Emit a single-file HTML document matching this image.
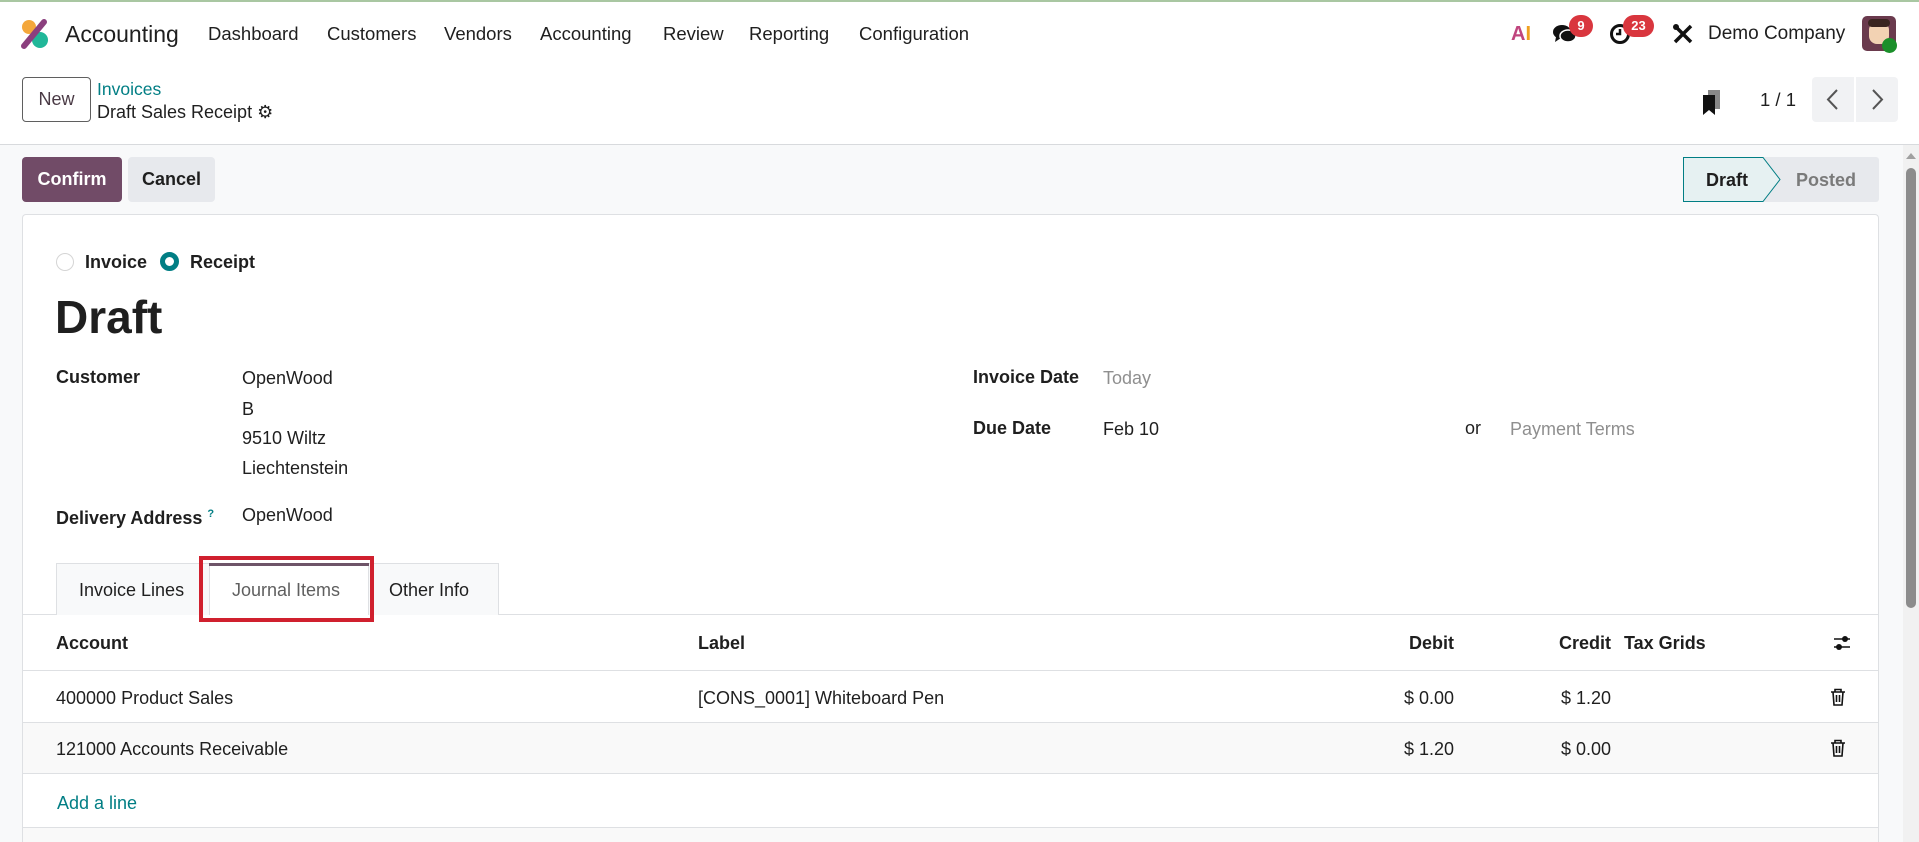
<!DOCTYPE html>
<html style="overflow:hidden;height:842px"><head><meta charset="utf-8"><style>
*{box-sizing:border-box;margin:0;padding:0}
body{width:1919px;height:842px;overflow:hidden;background:#fff;font-family:"Liberation Sans",sans-serif;color:#1f1f1f;position:relative;font-size:18px}
.a{position:absolute;white-space:nowrap;height:30px;line-height:30px}
.b{font-weight:bold}
.g{color:#8f8f8f}
.t{color:#017e84}
</style></head><body>
<div style="position:absolute;left:0;top:0;width:1919px;height:2px;background:#a9c7a2"></div>
<svg style="position:absolute;left:20px;top:18px" width="30" height="32" viewBox="0 0 30 32"><circle cx="20" cy="22" r="8" fill="#21b799"/><circle cx="9" cy="9" r="7" fill="#f4a73b"/><path d="M4 28 L24 4" stroke="#8b3f7e" stroke-width="6" stroke-linecap="round"/></svg>
<div class="a" style="left:65px;top:19px;font-size:23px">Accounting</div>
<div class="a" style="left:208px;top:19px;font-size:18.5px">Dashboard</div>
<div class="a" style="left:327px;top:19px;font-size:18.5px">Customers</div>
<div class="a" style="left:444px;top:19px;font-size:18.5px">Vendors</div>
<div class="a" style="left:540px;top:19px;font-size:18.5px">Accounting</div>
<div class="a" style="left:663px;top:19px;font-size:18.5px">Review</div>
<div class="a" style="left:749px;top:19px;font-size:18.5px">Reporting</div>
<div class="a" style="left:859px;top:19px;font-size:18.5px">Configuration</div>
<div class="a b" style="left:1511px;top:19px;font-size:20px;color:#c0457e">A<span style="color:#f0a020">I</span></div>
<svg style="position:absolute;left:1552px;top:22px" width="26" height="24" viewBox="0 0 26 24"><ellipse cx="10" cy="10" rx="9" ry="7" fill="#111"/><path d="M4 15 L3 20 L9 16Z" fill="#111"/><ellipse cx="16" cy="14" rx="8" ry="6" fill="#111" stroke="#fff" stroke-width="1.5"/></svg>
<div class="a b" style="left:1569px;top:15px;width:24px;height:22px;line-height:22px;border-radius:11px;background:#d9363e;color:#fff;font-size:13px;text-align:center">9</div>
<svg style="position:absolute;left:1609px;top:22px" width="24" height="24" viewBox="0 0 24 24"><circle cx="11" cy="12" r="8.5" fill="none" stroke="#111" stroke-width="3"/><path d="M11 7v5h-4" stroke="#111" stroke-width="2.5" fill="none"/></svg>
<div class="a b" style="left:1623px;top:15px;width:31px;height:22px;line-height:22px;border-radius:11px;background:#d9363e;color:#fff;font-size:13px;text-align:center">23</div>
<svg style="position:absolute;left:1672px;top:23px" width="22" height="22" viewBox="0 0 22 22"><path d="M3 3L19 19M19 3L3 19" stroke="#111" stroke-width="3.5"/><circle cx="4" cy="4" r="3" fill="#111"/></svg>
<div class="a" style="left:1708px;top:19px;font-size:19px">Demo Company</div>
<div style="position:absolute;left:1862px;top:16px;width:34px;height:35px;border-radius:5px;background:#6a3a4d"><div style="position:absolute;left:7px;top:6px;width:20px;height:22px;border-radius:8px;background:#f2d2b3"></div><div style="position:absolute;left:6px;top:3px;width:22px;height:8px;border-radius:5px;background:#3a2520"></div></div>
<div style="position:absolute;left:1882px;top:38px;width:15px;height:15px;border-radius:50%;background:#1b8f2a"></div>
<div class="a" style="left:22px;top:77px;width:69px;height:45px;line-height:43px;border:1px solid #5f5f5f;border-radius:4px;text-align:center;font-size:18px;color:#4a3a45">New</div>
<div class="a t" style="left:97px;top:74px;font-size:17.5px;color:#017e84">Invoices</div>
<div class="a" style="left:97px;top:97px;font-size:18px">Draft Sales Receipt <span style="font-size:18px">⚙</span></div>
<svg style="position:absolute;left:1702px;top:90px" width="20" height="26" viewBox="0 0 20 26"><rect x="6" y="0" width="12" height="19" fill="#888"/><path d="M1 5h12v20l-6-5-6 5z" fill="#111"/></svg>
<div class="a" style="left:1760px;top:85px;font-size:18.5px">1 / 1</div>
<div style="position:absolute;left:1812px;top:77px;width:42px;height:45px;background:#f1f2f4;border-radius:4px 0 0 4px"></div>
<div style="position:absolute;left:1856px;top:77px;width:42px;height:45px;background:#f1f2f4;border-radius:0 4px 4px 0"></div>
<svg style="position:absolute;left:1812px;top:77px" width="86" height="45"><path d="M25 13l-9 9.5 9 9.5M61 13l9 9.5-9 9.5" fill="none" stroke="#555" stroke-width="2"/></svg>
<div style="position:absolute;left:0;top:144px;width:1919px;height:1px;background:#d8dadd"></div>
<div style="position:absolute;left:0;top:145px;width:1903px;height:697px;background:#f8f9fa"></div>
<div style="position:absolute;left:1903px;top:145px;width:16px;height:697px;background:#f1f1f1"></div>
<svg style="position:absolute;left:1905px;top:150px" width="12" height="10"><path d="M1 9L6 3L11 9Z" fill="#a0a0a0"/></svg>
<div style="position:absolute;left:1906px;top:168px;width:10px;height:440px;border-radius:5px;background:#8c8c8c"></div>
<div class="a b" style="left:22px;top:157px;width:100px;height:45px;line-height:45px;background:#714b67;color:#fff;border-radius:4px;text-align:center;font-size:18px">Confirm</div>
<div class="a b" style="left:128px;top:157px;width:87px;height:45px;line-height:45px;background:#e7e9ed;border-radius:4px;text-align:center;font-size:18px">Cancel</div>
<div style="position:absolute;left:1683px;top:157px;width:196px;height:45px;background:#e7e9ed;border-radius:0 3px 3px 0"></div>
<svg style="position:absolute;left:1683px;top:157px" width="100" height="45"><path d="M0.5 0.5H80L97 22.5L80 44.5H0.5Z" fill="#e6f1f2" stroke="#017e84" stroke-width="1"/></svg>
<div class="a b" style="left:1706px;top:165px;font-size:18px">Draft</div>
<div class="a b" style="left:1796px;top:165px;font-size:18px;color:#7a7a7a">Posted</div>
<div style="position:absolute;left:22px;top:214px;width:1857px;height:628px;background:#fff;border:1px solid #dee0e3;border-bottom:none;border-radius:4px 4px 0 0"></div>
<div style="position:absolute;left:56px;top:253px;width:18px;height:18px;border-radius:50%;border:1px solid #d5d5d5"></div>
<div class="a b" style="left:85px;top:247px;font-size:18px">Invoice</div>
<div style="position:absolute;left:160px;top:252px;width:19px;height:19px;border-radius:50%;border:5.5px solid #017e84;background:#fff"></div>
<div class="a b" style="left:190px;top:247px;font-size:18px">Receipt</div>
<div class="a b" style="left:55px;top:291px;height:52px;line-height:52px;font-size:46px">Draft</div>
<div class="a b" style="left:56px;top:362px">Customer</div>
<div class="a" style="left:242px;top:363px">OpenWood</div>
<div class="a" style="left:242px;top:394px">B</div>
<div class="a" style="left:242px;top:423px">9510 Wiltz</div>
<div class="a" style="left:242px;top:453px">Liechtenstein</div>
<div class="a b" style="left:56px;top:499px">Delivery Address <sup class="t" style="font-size:11px;color:#017e84">?</sup></div>
<div class="a" style="left:242px;top:500px">OpenWood</div>
<div class="a b" style="left:973px;top:362px">Invoice Date</div>
<div class="a g" style="left:1103px;top:363px">Today</div>
<div class="a b" style="left:973px;top:413px">Due Date</div>
<div class="a" style="left:1103px;top:414px">Feb 10</div>
<div class="a" style="left:1465px;top:413px">or</div>
<div class="a g" style="left:1510px;top:414px">Payment Terms</div>
<div style="position:absolute;left:23px;top:614px;width:1855px;height:1px;background:#dee0e3"></div>
<div style="position:absolute;left:56px;top:563px;width:443px;height:52px;background:#f8f9fa;border:1px solid #dee0e3;border-bottom:none"></div>
<div style="position:absolute;left:209px;top:563px;width:160px;height:52px;background:#fff;border-left:1px solid #dee0e3;border-right:1px solid #dee0e3"></div>
<div style="position:absolute;left:209px;top:563px;width:160px;height:3px;background:#6e5468"></div>
<div class="a" style="left:79px;top:575px">Invoice Lines</div>
<div class="a" style="left:232px;top:575px;color:#5f5f5f">Journal Items</div>
<div class="a" style="left:389px;top:575px">Other Info</div>
<div style="position:absolute;left:199px;top:556px;width:175px;height:66px;border:4px solid #d0202e"></div>
<div class="a b" style="left:56px;top:628px">Account</div>
<div class="a b" style="left:698px;top:628px">Label</div>
<div class="a b" style="left:1354px;top:628px;width:100px;text-align:right">Debit</div>
<div class="a b" style="left:1511px;top:628px;width:100px;text-align:right">Credit</div>
<div class="a b" style="left:1624px;top:628px">Tax Grids</div>
<svg style="position:absolute;left:1832px;top:633px" width="20" height="20"><path d="M2 6h16M2 14h16" stroke="#111" stroke-width="1.6"/><circle cx="13" cy="6" r="3" fill="#111"/><circle cx="7" cy="14" r="3" fill="#111"/></svg>
<div style="position:absolute;left:23px;top:670px;width:1855px;height:1px;background:#dee0e3"></div>
<div class="a" style="left:56px;top:683px">400000 Product Sales</div>
<div class="a" style="left:698px;top:683px">[CONS_0001] Whiteboard Pen</div>
<div class="a" style="left:1354px;top:683px;width:100px;text-align:right">$ 0.00</div>
<div class="a" style="left:1511px;top:683px;width:100px;text-align:right">$ 1.20</div>
<div style="position:absolute;left:23px;top:722px;width:1855px;height:52px;background:#f9f9f9;border-top:1px solid #dee0e3;border-bottom:1px solid #dee0e3"></div>
<div class="a" style="left:56px;top:734px">121000 Accounts Receivable</div>
<div class="a" style="left:1354px;top:734px;width:100px;text-align:right">$ 1.20</div>
<div class="a" style="left:1511px;top:734px;width:100px;text-align:right">$ 0.00</div>
<svg style="position:absolute;left:1830px;top:688px" width="16" height="18" viewBox="0 0 16 18"><path d="M1 4h14M5 4V1.5h6V4M3 4l1 13h8l1-13M6.5 7v7M9.5 7v7" fill="none" stroke="#111" stroke-width="1.6"/></svg>
<svg style="position:absolute;left:1830px;top:739px" width="16" height="18" viewBox="0 0 16 18"><path d="M1 4h14M5 4V1.5h6V4M3 4l1 13h8l1-13M6.5 7v7M9.5 7v7" fill="none" stroke="#111" stroke-width="1.6"/></svg>
<div class="a t" style="left:57px;top:788px;color:#017e84">Add a line</div>
<div style="position:absolute;left:23px;top:827px;width:1855px;height:15px;background:#f9f9f9;border-top:1px solid #dee0e3"></div>
</body></html>
